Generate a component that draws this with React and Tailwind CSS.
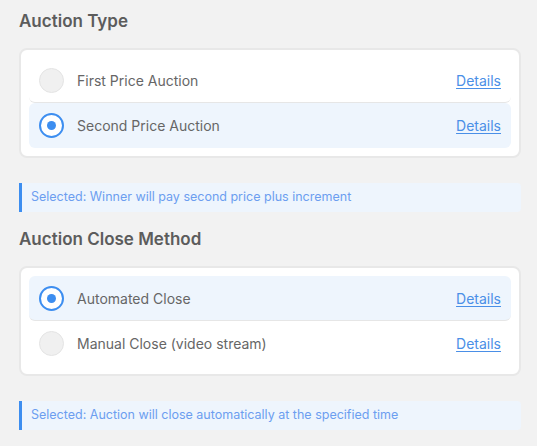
import { useState } from "react"

const Radio = ({ checked }) => (
  <span
    className={
      checked
        ? "flex h-[25px] w-[25px] shrink-0 items-center justify-center rounded-full border-[2.5px] border-[#3d8ef0] bg-white"
        : "h-[25px] w-[25px] shrink-0 rounded-full border border-[#e4e4e4] bg-[#f0f0f0]"
    }
  >
    {checked && <span className="h-[9px] w-[9px] rounded-full bg-[#3d8ef0]" />}
  </span>
)

const OptionRow = ({ label, checked, last, onPick }) => (
  <div
    onClick={onPick}
    className={
      "flex h-[45px] cursor-pointer items-center rounded-md px-[10px] " +
      (checked ? "bg-[#eef5fd] " : "") +
      (last ? "" : "border-b border-[#e6e6e6]")
    }
  >
    <Radio checked={checked} />
    <span className="ml-[13px] flex-1 text-[14px] text-[#666]">{label}</span>
    <a href="#" className="text-[14px] text-[#4a8fe7] underline underline-offset-2">
      Details
    </a>
  </div>
)

const Section = ({ title, options, selected, setSelected, note }) => (
  <div>
    <h2 className="mb-[17px] text-[17px] font-semibold leading-[20px] text-[#5c5c5c]">{title}</h2>
    <div className="rounded-lg border-2 border-[#e8e8e8] bg-white p-[8px]">
      {options.map((o, i) => (
        <OptionRow
          key={o}
          label={o}
          checked={selected === i}
          last={i === options.length - 1}
          onPick={() => setSelected(i)}
        />
      ))}
    </div>
    <div className="mt-[25px] flex h-[29px] items-center rounded-r border-l-[3px] border-[#3d8ef0] bg-[#eef5fd] pl-[9px] text-[12.5px] text-[#6c9ef0]">
      {note}
    </div>
  </div>
)

export default function App() {
  const [tipo, setTipo] = useState(1)
  const [cierre, setCierre] = useState(0)

  return (
    <div className="min-h-screen bg-[#f2f2f2] pl-[19px] pr-[16px] pt-[11px]" style={{ fontFamily: "Inter, 'Open Sans', sans-serif" }}>
      <Section
        title="Auction Type"
        options={["First Price Auction", "Second Price Auction"]}
        selected={tipo}
        setSelected={setTipo}
        note="Selected: Winner will pay second price plus increment"
      />
      <div className="mt-[17px]">
        <Section
          title="Auction Close Method"
          options={["Automated Close", "Manual Close (video stream)"]}
          selected={cierre}
          setSelected={setCierre}
          note="Selected: Auction will close automatically at the specified time"
        />
      </div>
      <h2 className="mt-[14px] text-[17px] font-semibold leading-[20px] text-[#5c5c5c]">Auction start date</h2>
    </div>
  )
}
